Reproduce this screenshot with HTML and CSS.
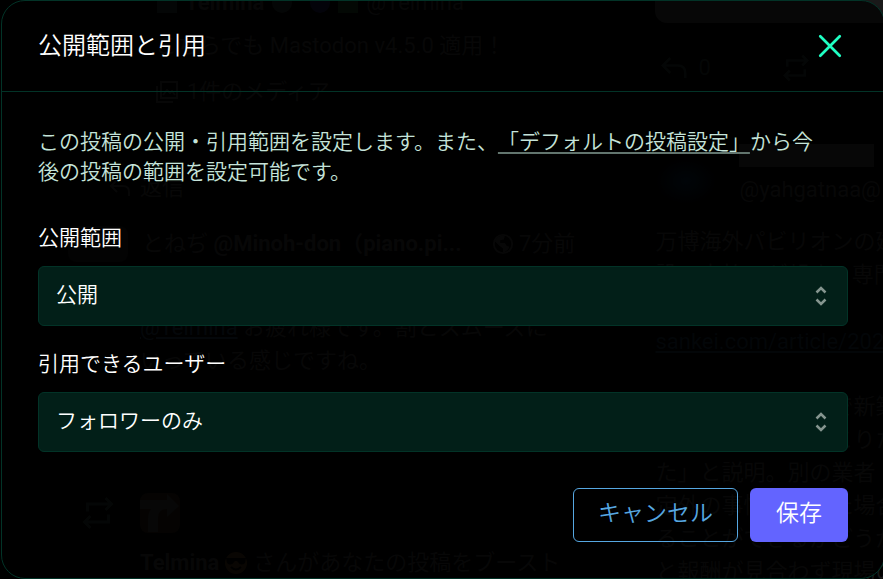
FILE: index.html
```html
<!DOCTYPE html>
<html lang="ja">
<head>
    <meta charset="UTF-8">
    <meta name="viewport" content="width=device-width, initial-scale=1.0">
    <title>公開範囲と引用</title>
    <link rel="stylesheet" href="styles.css">
</head>
<body>

    <!-- Shared icons -->
    <svg class="sprite" aria-hidden="true">
        <symbol id="icon-reply" viewBox="0 0 24 24">
            <path d="M9 4 3 10l6 6M3 10h12q6 0 6 6v4" fill="none" stroke="currentColor" stroke-width="2"/>
        </symbol>
        <symbol id="icon-boost" viewBox="0 0 24 24">
            <path d="M5 11V6h16M17 2l4 4-4 4M19 13v5H3M7 14l-4 4 4 4" fill="none" stroke="currentColor" stroke-width="2"/>
        </symbol>
        <symbol id="icon-unfold" viewBox="0 0 24 24">
            <path d="M7.500 8.500 12 4l4.500 4.500M7.500 15.500 12 20l4.500-4.500" fill="none" stroke="currentColor" stroke-width="2.500"/>
        </symbol>
    </svg>

    <!-- Timeline behind the dialog -->
    <div class="timeline" aria-hidden="true">
        <div class="column">
            <div class="line name-line">
                <span class="chip"></span><b>Telmina</b><span class="dot"></span>
                <span class="dot blue"></span><span class="chip green"></span><span>@Telmina</span>
            </div>
            <div class="line indent reply-text">こちらでも Mastodon v4.5.0 適用！</div>
            <div class="line indent media">
                <svg class="icon" viewBox="0 0 24 24"><path d="M6 2h16v16H6zM2 6v16h16M8 15l4-5 3 3 2-2 3 4" fill="none" stroke="currentColor" stroke-width="2"/></svg>
                1件のメディア
            </div>
            <div class="line action">
                <svg class="icon"><use href="#icon-reply"/></svg>返信
            </div>
            <div class="line author">
                <span class="avatar"></span>
                <span class="author-name">とねぢ <b>@Minoh-don（piano.pi...</b></span>
                <svg class="globe" viewBox="0 0 24 24"><circle cx="12" cy="12" r="10" fill="none" stroke="currentColor" stroke-width="2"/><path d="M3 9c3-6 8-7 11-6l-1 4-4 1v3h5l2 3 3 1c-1 4-5 6-7 6v-4l-4-3z" fill="currentColor"/></svg>
                <span>7分前</span>
            </div>
            <div class="post">
                <a class="mention">@Telmina</a> お疲れ様です。割とスムーズに<br>いっている感じですね。
            </div>
            <div class="boost">
                <svg class="boost-icon"><use href="#icon-boost"/></svg>
                <svg class="boost-avatar" viewBox="0 0 40 40"><rect width="40" height="40" rx="8" fill="#120d08"/><path d="M0 7h27V1l12 12-12 11v-8q-9 0-9 9v14H8V26q0-6 3-10H0z" fill="currentColor"/></svg>
            </div>
            <div class="line boosted-by">
                <b>Telmina</b>
                <svg class="icon" viewBox="0 0 24 24"><circle cx="12" cy="12" r="11" fill="#21170a"/><path d="M2 7h20l-1 5q-4 4-8-2h-2q-4 6-8 2z" fill="#020202"/><path d="M7 16q5 5 10 0" fill="none" stroke="#020202" stroke-width="2"/></svg>
                さんがあなたの投稿をブースト
            </div>
        </div>
        <div class="column">
            <div class="card"></div>
            <div class="line counts">
                <svg class="count-icon"><use href="#icon-reply"/></svg><span>0</span>
                <svg class="count-icon"><use href="#icon-boost"/></svg>
            </div>
            <div class="profile">
                <span class="profile-image"></span>
                <div>
                    <div class="profile-name"></div>
                    <div class="line">@yahgatnaa@</div>
                </div>
            </div>
            <div class="article">万博海外パビリオンの建<br>設で未払いが起き、専門業</div>
            <div class="line article-link">sankei.com/article/2025</div>
            <div class="article">関係者は「これまで新築<br>工事ではなかったこりた<br>た」と説明。別の業者<br>定外の事情が生じた場合<br>ることができるかどうか<br>と報酬が見合わず現場の</div>
        </div>
    </div>

    <div class="dialog" role="dialog" aria-labelledby="dialog-title">
        <div class="dialog-header">
            <h1 id="dialog-title">公開範囲と引用</h1>
            <button type="button" class="close" aria-label="閉じる">
                <svg viewBox="0 0 24 24"><path d="M3 3 21 21M21 3 3 21" fill="none" stroke="currentColor" stroke-width="2.500" stroke-linecap="round"/></svg>
            </button>
        </div>

        <form class="dialog-body">
            <p class="description">この投稿の公開・引用範囲を設定します。また、<a href="#">「デフォルトの投稿設定」</a>から今後の投稿の範囲を設定可能です。</p>

            <div class="field">
                <label for="visibility">公開範囲</label>
                <div class="select">
                    <select id="visibility">
                        <option>公開</option>
                    </select>
                    <svg><use href="#icon-unfold"/></svg>
                </div>
            </div>

            <div class="field">
                <label for="quote">引用できるユーザー</label>
                <div class="select">
                    <select id="quote">
                        <option>フォロワーのみ</option>
                    </select>
                    <svg><use href="#icon-unfold"/></svg>
                </div>
            </div>

            <div class="buttons">
                <button type="button" class="button secondary">キャンセル</button>
                <button type="submit" class="button">保存</button>
            </div>
        </form>
    </div>

</body>
</html>
```

FILE: styles.css
```css
* {
    box-sizing: border-box;
}

body {
    margin: 0;
    background: #000;
    color: #fff;
    font-family: Roboto, "Noto Sans CJK JP", sans-serif;
    font-size: 21px;
    line-height: 30px;
    text-spacing-trim: space-all;
    overflow: hidden;
}

.sprite {
    position: absolute;
    width: 0;
    height: 0;
}

/* Dialog */
.dialog {
    position: relative;
    margin: 0 -2px 0 1px;
    border: 1px solid #023327;
    border-radius: 24px;
    background: rgba(0, 0, 0, 0.7);
}

.dialog-header {
    display: flex;
    justify-content: space-between;
    align-items: center;
    height: 91px;
    padding: 0 36px;
    border-bottom: 1px solid #023327;
}

h1 {
    margin: 0;
    font-size: 24px;
    font-weight: 350;
}

.close {
    display: flex;
    margin-right: 5px;
    padding: 0;
    border: 0;
    background: none;
    color: #1fffc3;
    cursor: pointer;
}

.close svg {
    width: 26px;
    height: 26px;
}

.dialog-body {
    padding: 35px 36px 36px;
    font-weight: 350;
}

.description {
    margin: 0 0 36px;
    padding-right: 16px;
    color: #c5e3d9;
}

.description a {
    color: inherit;
    text-decoration: underline 2px #62756e;
    text-underline-offset: 3px;
    text-decoration-skip-ink: none;
}

.field {
    margin-bottom: 23px;
}

.field label {
    display: block;
    margin-bottom: 13px;
}

.select {
    position: relative;
}

.select select {
    display: block;
    width: 100%;
    height: 60px;
    padding: 0 56px 2px 17px;
    border: 1px solid #023327;
    border-radius: 6px;
    background: #021f18;
    color: #fff;
    font: inherit;
    appearance: none;
}

.select svg {
    position: absolute;
    top: 18px;
    right: 15px;
    width: 24px;
    height: 24px;
    color: #85958f;
    pointer-events: none;
}

.buttons {
    display: flex;
    justify-content: flex-end;
    gap: 12px;
    margin-top: 36px;
}

.button {
    height: 54px;
    padding: 0 26px 2px;
    border: 0;
    border-radius: 6px;
    background: #6364ff;
    color: #fff;
    font: inherit;
    font-size: 23px;
    cursor: pointer;
}

.button.secondary {
    padding: 0 24px 2px;
    border: 1px solid #56a7e1;
    background: none;
    color: #56a7e1;
}

/* Timeline */
.timeline {
    position: absolute;
    inset: 0;
    display: grid;
    grid-template-columns: 74% 26%;
    overflow: hidden;
    color: #191919;
    font-size: 22px;
    line-height: 33px;
    white-space: nowrap;
}

.line {
    display: flex;
    align-items: center;
    height: 33px;
}

.icon {
    width: 24px;
    height: 24px;
}

.name-line {
    gap: 8px;
    margin-top: -14px;
    padding-left: 157px;
}

.chip,
.dot {
    width: 20px;
    height: 20px;
    background: #101614;
}

.dot {
    border-radius: 50%;
}

.blue {
    margin-left: 10px;
    background: #0c0c22;
}

.green {
    background: #0b1c10;
}

.indent {
    padding-left: 155px;
}

.reply-text {
    margin-top: 10px;
}

.media {
    gap: 8px;
    margin-top: 13px;
}

.action {
    gap: 8px;
    margin-top: 63px;
    padding-left: 108px;
}

.author {
    margin-top: 23px;
    padding-left: 68px;
}

.avatar {
    width: 60px;
    height: 36px;
    margin-right: 14px;
    border-radius: 8px;
    background: #0a0a0a;
}

.author-name {
    width: 350px;
}

.globe {
    width: 22px;
    height: 22px;
    margin-right: 5px;
}

.post {
    margin-top: 51px;
    padding-left: 140px;
}

.mention {
    color: #101a22;
    text-decoration: underline;
}

.boost {
    display: flex;
    align-items: center;
    gap: 24px;
    margin-top: 116px;
    padding-left: 80px;
}

.boost-icon {
    width: 36px;
    height: 36px;
    color: #101614;
}

.boost-avatar {
    width: 40px;
    height: 40px;
}

.boosted-by {
    gap: 5px;
    margin-top: 13px;
    padding-left: 140px;
}

.card {
    height: 23px;
    margin-left: 2px;
    border-bottom-left-radius: 12px;
    background: #191919;
}

.counts {
    gap: 9px;
    margin-top: 28px;
    padding-left: 6px;
    color: #101614;
}

.count-icon {
    width: 30px;
    height: 30px;
}

.counts span {
    width: 74px;
}

.profile {
    display: flex;
    gap: 20px;
    margin-top: 60px;
}

.profile-image {
    width: 66px;
    height: 50px;
    margin-top: 12px;
    background: radial-gradient(#03101c, transparent 70%);
}

.profile-name {
    width: 135px;
    height: 23px;
    margin-bottom: 6px;
    background: #191919;
}

.article {
    margin-top: 19px;
    padding-left: 2px;
}

.article-link {
    margin: 34px 0 32px;
    padding-left: 2px;
    color: #0b141c;
    text-decoration: underline;
}

.article-link + .article {
    margin-top: 0;
}
```
